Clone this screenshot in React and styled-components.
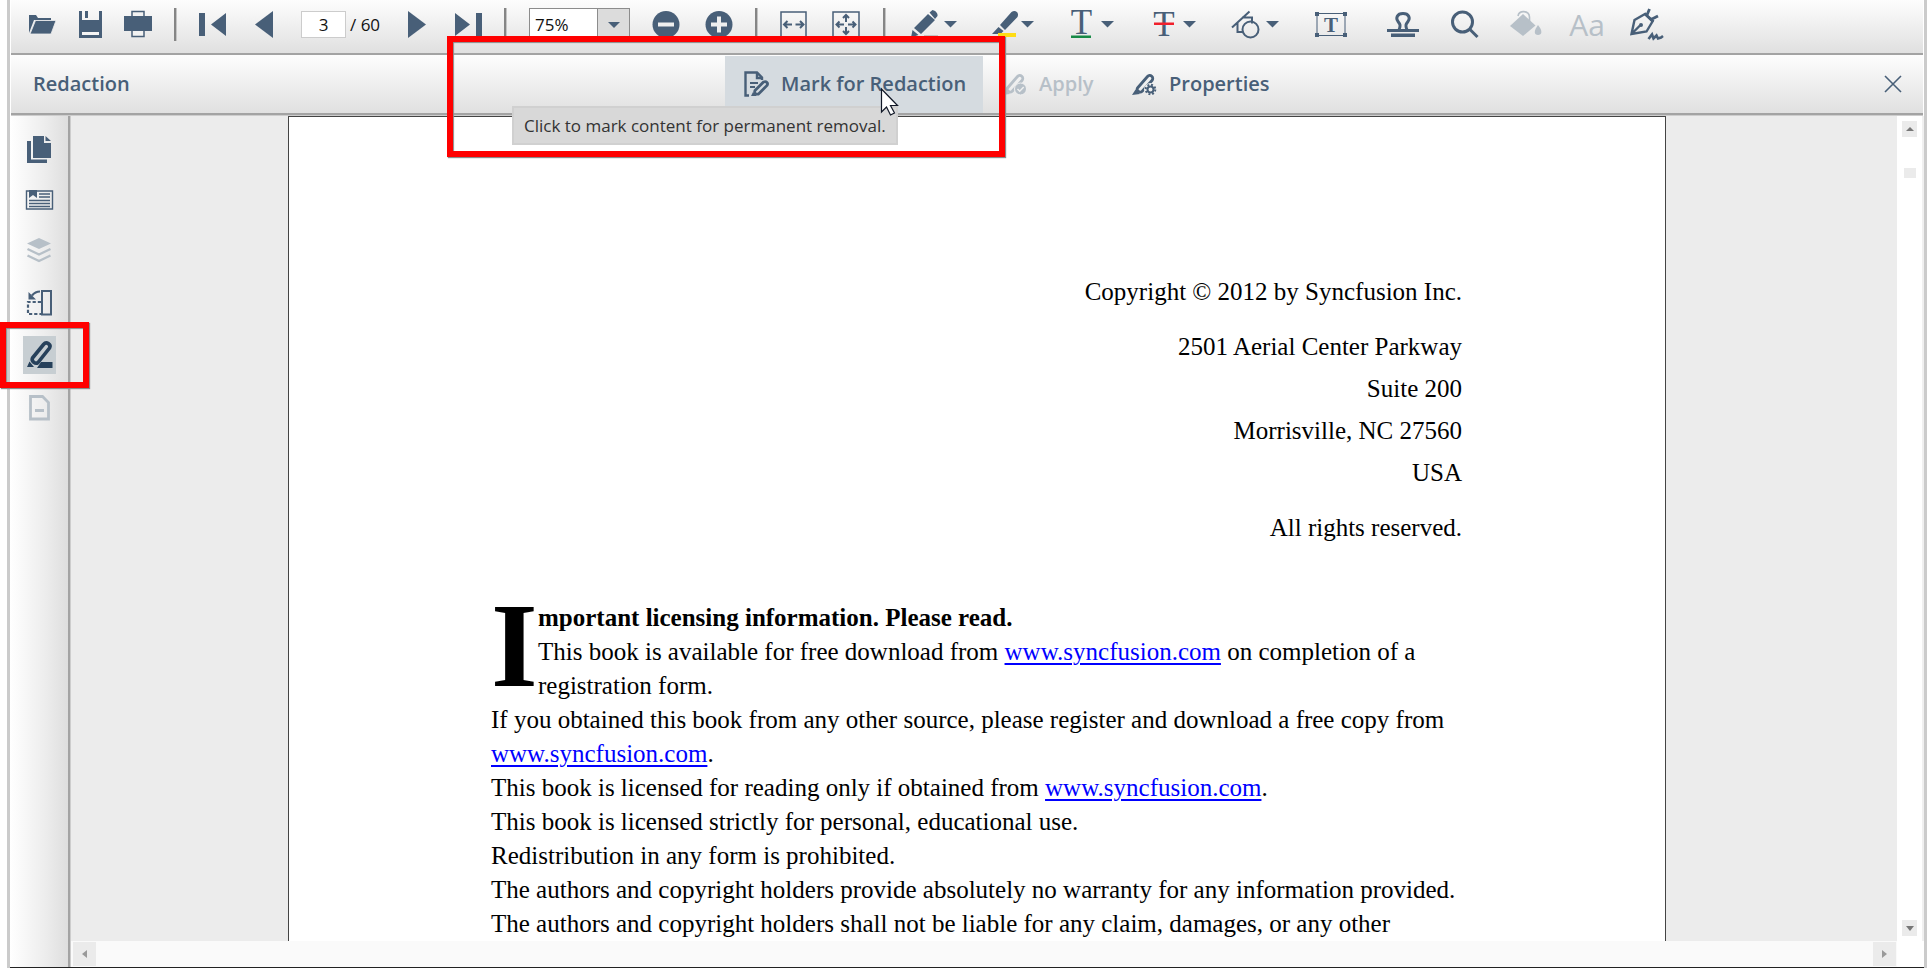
import React from "react";
import styled, { createGlobalStyle, css } from "styled-components";

const INK = "#485f78";
const MUTED = "#b7c0c8";
const UI_FONT = '"Open Sans", "Noto Sans", sans-serif';

const GlobalStyle = createGlobalStyle`
  *, *::before, *::after { box-sizing: border-box; }
  body { margin: 0; background: #fff; font-family: ${UI_FONT}; overflow: hidden; }
  button, input, select { font: inherit; color: inherit; }
  svg { display: block; overflow: visible; }
`;

const Shell = styled.div`
  display: grid;
  grid-template-rows: auto auto minmax(0, 1fr);
  grid-template-columns: minmax(0, 1fr);
  height: 100vh;
  margin-left: 7px;
  border: solid #cbcbcb;
  border-width: 0 3px;
  box-shadow: inset 0 -1px #222;
`;

const barStyle = css`
  display: flex;
  align-items: center;
  margin: 0 1px;
  background: linear-gradient(#fdfdfd, #ececec 60%, #e0e0e0);
  border-bottom: 2px solid #a3a3a3;
  box-shadow: 0 1px #cdcdcd;
  color: ${INK};
`;

const Toolbar = styled.header`
  ${barStyle}
  height: 55px;
  gap: 22px;
  padding-left: 17px;
`;

const Group = styled.div`
  display: flex;
  align-items: center;
  flex: none;
  gap: ${(p) => p.$gap}px;
`;

const Tool = styled.button`
  display: flex;
  align-items: center;
  justify-content: center;
  flex: none;
  width: ${(p) => p.$w}px;
  height: 41px;
  padding: 0;
  border: 0;
  background: none;
  color: ${(p) => (p.disabled ? MUTED : INK)};
`;

const Separator = styled.span`
  flex: none;
  width: 3px;
  height: 33px;
  margin-bottom: 4px;
  border-left: 2px solid #858585;
  border-right: 1px solid #c4c4c4;
`;

const PageField = styled.label`
  display: flex;
  align-items: center;
  gap: 4px;
  width: 79px;
  margin-bottom: 4px;
  color: #111;
  font-size: 17px;
  white-space: nowrap;
`;

const PageInput = styled.input`
  width: 45px;
  height: 27px;
  padding: 0;
  border: 1px solid #ccc;
  background: #fff;
  text-align: center;
`;

const ZoomBox = styled.div`
  display: grid;
  grid-template-columns: minmax(0, 1fr) 32px;
  flex: none;
  width: 101px;
  height: 33px;
  margin-bottom: 4px;
  border: 1px solid #8c8c8c;
  background: #fff;
`;

const ZoomSelect = styled.select`
  grid-area: 1 / 1 / 2 / 3;
  appearance: none;
  padding: 0 5px;
  border: 0;
  background: none;
  color: #111;
  font-size: 17px;
`;

const ZoomArrow = styled.span`
  grid-area: 1 / 2 / 2 / 3;
  display: grid;
  place-items: center;
  border-left: 1px solid #8c8c8c;
  background: #dcdcdc;
  color: ${INK};
  pointer-events: none;
`;

const RedactionBar = styled.section`
  ${barStyle}
  height: 60px;
  padding-top: 1px;
`;

const BarTitle = styled.h1`
  width: 138px;
  margin: 0;
  padding: 0 0 2px 22px;
  font-size: 20px;
  font-weight: 600;
`;

const Actions = styled.div`
  display: flex;
  align-items: stretch;
  justify-content: center;
  flex: 1;
  height: 100%;
`;

const ActionAnchor = styled.div`
  position: relative;
  display: flex;
`;

const Action = styled.button`
  display: flex;
  align-items: center;
  flex: none;
  gap: 12px;
  width: ${(p) => p.$w}px;
  padding: 0 0 2px 19px;
  border: 0;
  background: ${(p) => (p.$active ? "#d5dbe0" : "none")};
  color: ${(p) => (p.disabled ? MUTED : INK)};
  font-size: 20px;
  font-weight: 600;
  white-space: nowrap;
`;

const CloseButton = styled.button`
  display: grid;
  place-items: center;
  width: 60px;
  height: 100%;
  padding: 0 0 2px;
  border: 0;
  background: none;
`;

const Tooltip = styled.div`
  position: absolute;
  z-index: 2;
  top: 50px;
  left: -213px;
  padding: 0 10px;
  border: 2px solid #d0d0d0;
  background: #d8d8d8;
  color: #333;
  font-size: 17px;
  font-weight: 400;
  line-height: 35px;
  white-space: nowrap;
`;

const Callout = styled.div`
  position: absolute;
  z-index: 3;
  top: ${(p) => p.$top}px;
  left: ${(p) => p.$left}px;
  width: ${(p) => p.$w}px;
  height: ${(p) => p.$h}px;
  border: 6px solid #f00;
  box-shadow: 1px 1px 1px #8a8a8a, inset 1px 1px 1px #8a8a8a;
  pointer-events: none;
`;

const Cursor = styled.svg`
  position: absolute;
  z-index: 4;
  top: 32px;
  left: 155px;
`;

const Workspace = styled.main`
  display: grid;
  grid-template-columns: 61px minmax(0, 1fr) 27px;
  grid-template-rows: minmax(0, 1fr) 26px;
  padding: 1px 0;
`;

const Sidebar = styled.nav`
  grid-row: 1 / 3;
  display: flex;
  flex-direction: column;
  align-items: center;
  gap: 14px;
  padding-top: 12px;
  border-right: 2px solid #a3a3a3;
  box-shadow: 1px 0 #cdcdcd;
  background: linear-gradient(90deg, #fff, #ededed 60%, #dedede);
  margin-right: 1px;
`;

const SideAnchor = styled.div`
  position: relative;
`;

const SideButton = styled.button`
  display: block;
  width: 33px;
  height: 38px;
  padding: 0;
  border: 0;
  background: ${(p) => (p.$active ? "#c7ced2" : "none")};
  color: ${(p) => (p.disabled ? MUTED : p.$active ? "#27415b" : INK)};
`;

const Viewer = styled.div`
  display: flex;
  justify-content: center;
  overflow: hidden;
  padding-right: 14px;
  background: #ececec;
`;

const Page = styled.article`
  width: 100%;
  max-width: 1378px;
  height: max-content;
  min-height: 100%;
  padding: 154px 203px 0 202px;
  border: 1px solid #444;
  border-bottom: 0;
  background: #fff;
  color: #000;
  font-family: "Liberation Serif", serif;
  font-size: 25px;
`;

const Imprint = styled.p`
  margin: 0 0 13px;
  line-height: 42px;
  text-align: right;
`;

const Licence = styled.section`
  margin-top: 52px;
  line-height: 34px;
  p, h2 { margin: 0; font-size: 25px; }
  a { color: #00f; text-decoration-thickness: 2px; text-underline-offset: 3px; }
`;

const DropCap = styled.span`
  float: left;
  width: 47px;
  height: 102px;
  font-size: 120px;
  font-weight: 700;
  line-height: 90px;
`;

const VScroll = styled.div`
  display: flex;
  flex-direction: column;
  align-items: center;
  padding: 5px 0;
  border-right: 2px solid #f0f0f0;
  background: #fff;
`;

const HScroll = styled.div`
  display: flex;
  justify-content: space-between;
  padding: 1px 1px 1px 2px;
  background: #fafafa;
`;

const ScrollButton = styled.button`
  display: grid;
  place-items: center;
  flex: none;
  width: ${(p) => (p.$wide ? 23 : 15)}px;
  height: ${(p) => (p.$wide ? 24 : 16)}px;
  padding: 0;
  border: 0;
  background: #ebebeb;
`;

const VThumb = styled.span`
  width: 12px;
  height: 10px;
  margin: 31px 0 auto;
  background: #ebebeb;
`;

const Glyph = ({ w, h, children, ...rest }) => (
  <svg width={w} height={h} viewBox={`0 0 ${w} ${h}`} fill="currentColor" aria-hidden="true" {...rest}>
    {children}
  </svg>
);

const Caret = () => (
  <Glyph w={13} h={41}><path d="M0 15h13l-6.500 6.500z" /></Glyph>
);

const SplitTool = ({ label, w, children }) => (
  <Group $gap={0}>
    <Tool $w={w} aria-label={label}><Glyph w={w} h={41}>{children}</Glyph></Tool>
    <Tool $w={13} aria-label={`${label} options`}><Caret /></Tool>
  </Group>
);

const IconTool = ({ label, w, disabled, children }) => (
  <Tool $w={w} disabled={disabled} aria-label={label}><Glyph w={w} h={41}>{children}</Glyph></Tool>
);

const Marker = () => (
  <>
    <path d="M5.500 15 15.500 3.500a3 3 0 0 1 4.500 4L10 18.500c-2 1.500-6-.5-4.500-3.500z" fill="none" stroke="currentColor" strokeWidth="2.800" />
    <path d="m3.500 16.500 4.500 4.500-8 1z" />
  </>
);

function MainToolbar() {
  return (
    <Toolbar>
      <Group $gap={22}>
        <IconTool label="Open" w={28}>
          <path d="M1 27V9h7l2 3h13v2H6z" /><path d="M7.500 14.500H28l-5 13.500H2z" stroke="#efefef" strokeWidth=".8" />
        </IconTool>
        <IconTool label="Save" w={24}>
          <path d="M1 5h3v9h17V5h3v27H1z" /><path d="M7 5h3v7H7z" /><path d="M4 26h17v3H4z" fill="#f5f5f5" />
        </IconTool>
        <IconTool label="Print" w={28}>
          <path d="M0 10h28v15H0z" /><path d="M8 10V5.500h12V10M8 25v5.500h12V25" fill="#f2f2f2" stroke="currentColor" strokeWidth="1.500" />
        </IconTool>
      </Group>
      <Separator />
      <Group $gap={28}>
        <IconTool label="First page" w={28}><path d="M0 7h6v23H0zM27 7v23L12 18.500z" /></IconTool>
        <IconTool label="Previous page" w={18}><path d="M18 5v27L0 18.500z" /></IconTool>
        <PageField>
          <PageInput defaultValue="3" aria-label="Page number" />/ 60
        </PageField>
        <IconTool label="Next page" w={18}><path d="M0 5v27l18-13.500z" /></IconTool>
        <IconTool label="Last page" w={28}><path d="M22 7h6v24h-6zM1 7v23l15-11.500z" /></IconTool>
      </Group>
      <Separator />
      <ZoomBox>
        <ZoomSelect aria-label="Zoom" defaultValue="75%">
          <option>50%</option><option>75%</option><option>100%</option>
        </ZoomSelect>
        <ZoomArrow><Glyph w={12} h={6}><path d="M0 0h12L6 6z" /></Glyph></ZoomArrow>
      </ZoomBox>
      <Group $gap={25}>
        <IconTool label="Zoom out" w={28}>
          <circle cx="14" cy="18.500" r="13.500" /><path d="M6 16.500h16v4H6z" fill="#efefef" />
        </IconTool>
        <IconTool label="Zoom in" w={28}>
          <circle cx="14" cy="18.500" r="13.500" /><path d="M6 16.500h6v-6h4v6h6v4h-6v6h-4v-6H6z" fill="#efefef" />
        </IconTool>
      </Group>
      <Separator />
      <Group $gap={25}>
        <IconTool label="Fit width" w={28}>
          <path d="M1 6h25v25H1z" fill="none" stroke="currentColor" strokeWidth="1.500" />
          <path d="M4 18.500h8M7.500 15 4 18.500 7.500 22M23.500 18.500h-8M20 15l3.500 3.500L20 22" fill="none" stroke="currentColor" strokeWidth="2" />
        </IconTool>
        <IconTool label="Fit page" w={28}>
          <path d="M0 6h26v25H0z" fill="none" stroke="currentColor" strokeWidth="1.500" />
          <path d="M3.500 18.500H11M6.500 15.500l-3 3 3 3M22.500 18.500H15M19.500 15.500l3 3-3 3M13 9v7M10 12l3-3 3 3M13 28v-7M10 25l3 3 3-3" fill="none" stroke="currentColor" strokeWidth="2" />
        </IconTool>
      </Group>
      <Separator />
      <Group $gap={34}>
        <SplitTool label="Pen" w={36}>
          <path d="m6 22 14-14 7 6-14 14zM21.500 6.500l3-2.500c4 1 5.500 4 5 6l-2.500 3zM4.500 24l6 5-7.500 2.500z" />
          <path d="M16 29h14v2H16z" fill="#c3c3c3" />
        </SplitTool>
        <SplitTool label="Highlight" w={30}>
          <path d="M9 19 20.500 6c4-3 8 1 6 5L14 24zM7.500 21l5 4-3 3H1z" />
          <path d="M7 27h18v4H7z" fill="#ffdc15" />
        </SplitTool>
        <SplitTool label="Underline" w={33}>
          <text x="13.500" y="28" textAnchor="middle" fontFamily="Liberation Serif, serif" fontSize="35">T</text>
          <path d="M3 29.500h20V32H3z" fill="#178a46" />
        </SplitTool>
        <SplitTool label="Strikethrough" w={35}>
          <text x="16" y="30" textAnchor="middle" fontFamily="Liberation Serif, serif" fontSize="35">T</text>
          <path d="M6 16.500h20V19H6z" fill="#f0202c" />
        </SplitTool>
        <SplitTool label="Shapes" w={36}>
          <path d="M2 21.500 19.500 5.500M12 11.500h10v6M7.500 17v9h6" fill="none" stroke="currentColor" strokeWidth="2" />
          <circle cx="20.500" cy="23.500" r="8" fill="none" stroke="currentColor" strokeWidth="2" />
        </SplitTool>
      </Group>
      <IconTool label="Text box" w={60}>
        <path d="M16 7.500h28v22H16z" fill="none" stroke="currentColor" />
        <path d="M14 6h4v4h-4zM42 6h4v4h-4zM14 27h4v4h-4zM42 27h4v4h-4z" />
        <text x="30" y="26" textAnchor="middle" fontFamily="Liberation Serif, serif" fontWeight="700" fontSize="21">T</text>
      </IconTool>
      <Group $gap={21}>
        <IconTool label="Stamp" w={40}>
          <path d="M16 24c2-5 1-6-1-8.500C12.500 12 14 7.500 20 7.500s7.500 4.500 5 8c-2 2.500-3 3.500-1 8.500" fill="none" stroke="currentColor" strokeWidth="3" />
          <path d="M4 23h32v3H4zM8 27.500h24V31H8z" />
        </IconTool>
        <IconTool label="Search" w={40}>
          <circle cx="18.500" cy="16" r="10" fill="none" stroke="currentColor" strokeWidth="3" />
          <path d="m25.500 23 8 8" stroke="currentColor" strokeWidth="3" />
        </IconTool>
        <IconTool label="Fill colour" w={40} disabled>
          <path d="m5 20 13-12 12.500 11.500L18 30z" />
          <path d="M13 10c1-6 11-6 11.500 1v6" fill="none" stroke="currentColor" strokeWidth="1.600" />
          <path d="M33 19c5 6 4 10 0 10s-4.500-4 0-10z" />
        </IconTool>
        <IconTool label="Font" w={40} disabled>
          <text x="21" y="30" textAnchor="middle" fontFamily="Open Sans, sans-serif" fontSize="30">Aa</text>
        </IconTool>
        <IconTool label="Signature" w={40}>
          <path d="M4.500 28 7.500 14 18 8l7.500 7.500-6 10zM5 27.500l8-8" fill="none" stroke="currentColor" strokeWidth="2.400" />
          <circle cx="14" cy="19" r="2" />
          <path d="m17.500 7.500 9 8M20 9l2.500-6M24 13.500l7-3.500" fill="none" stroke="currentColor" strokeWidth="2.800" />
          <path d="m21.500 33 3.500-4.500 1.500 4 3-3 1.500 3 3-1 2-1.500" fill="none" stroke="currentColor" strokeWidth="2.600" />
        </IconTool>
      </Group>
    </Toolbar>
  );
}

function RedactionTools() {
  return (
    <RedactionBar>
      <BarTitle>Redaction</BarTitle>
      <Actions>
        <ActionAnchor>
          <Action $active $w={258}>
            <Glyph w={25} h={26}>
              <path d="M5 24.500H1.500v-23H13l5 5V9M13 1.500V7h5" fill="none" stroke="currentColor" strokeWidth="2.400" />
              <path d="M6 11h8v2H6zM6 15h5v2H6zM7 25l2-4 4 4z" />
              <path d="m11 19.500 8.500-8.500c3-1 5 1 3.500 3.500L14.500 23c-3 .5-4.500-1-3.500-3.500z" fill="none" stroke="currentColor" strokeWidth="2.800" />
            </Glyph>
            Mark for Redaction
          </Action>
          <Tooltip role="tooltip">Click to mark content for permanent removal.</Tooltip>
          <Callout $top={-20} $left={-278} $w={558} $h={121} />
          <Cursor width="20" height="30" viewBox="0 0 20 30" aria-hidden="true">
            <path d="M1.500 1v23l5-5 4 8 4-2-4-7.500h7z" fill="#fff" stroke="#111827" strokeWidth="1.200" />
          </Cursor>
        </ActionAnchor>
        <Action disabled $w={130}>
          <Glyph w={25} h={22}>
            <Marker />
            <circle cx="18.500" cy="16" r="6" stroke="#f0f0f0" />
            <path d="m15.500 16 2.200 2.200 4-4.200" fill="none" stroke="#f0f0f0" strokeWidth="1.500" />
          </Glyph>
          Apply
        </Action>
        <Action $w={174}>
          <Glyph w={25} h={22}>
            <Marker />
            <circle cx="18.500" cy="16.500" r="6.500" fill="#eee" />
            <circle cx="18.500" cy="16.500" r="3" fill="none" stroke="currentColor" strokeWidth="2" />
            <circle cx="18.500" cy="16.500" r="4.800" fill="none" stroke="currentColor" strokeWidth="2" strokeDasharray="1.900 1.870" />
          </Glyph>
          Properties
        </Action>
      </Actions>
      <CloseButton aria-label="Close">
        <Glyph w={18} h={18}><path d="m1 1 16 16M17 1 1 17" stroke="currentColor" strokeWidth="1.600" /></Glyph>
      </CloseButton>
    </RedactionBar>
  );
}

const SideTool = ({ label, active, disabled, children }) => (
  <SideButton $active={active} disabled={disabled} aria-label={label}>
    <Glyph w={33} h={38}>{children}</Glyph>
  </SideButton>
);

function SidePanel() {
  return (
    <Sidebar>
      <SideTool label="Page thumbnails">
        <path d="M10 8h11v7h7v15H10zM22.500 8v5H28z" /><path d="M4 13h4v18.500h16V35H4z" />
      </SideTool>
      <SideTool label="Bookmarks">
        <path d="M3.500 11h26v18h-26z" fill="none" stroke="currentColor" strokeWidth="1.400" />
        <path d="M6 10h8v8l-4-3-4 3z" />
        <path d="M16 14h11M16 17h11M6 20.500h21M6 23.500h21M6 26.500h21" stroke="currentColor" strokeWidth="1.300" />
      </SideTool>
      <SideTool label="Layers" disabled>
        <path d="m16 6 12 5.500L16 17 4 11.500z" />
        <path d="m4.500 17 11.500 5.500L27.500 17M4.500 23.500 16 29l11.500-5.500" fill="none" stroke="currentColor" strokeWidth="2.400" />
      </SideTool>
      <SideTool label="Organize pages">
        <path d="M19 7h9v23.500h-9z" fill="none" stroke="currentColor" strokeWidth="2" />
        <path d="M18 18H5v12h13" fill="none" stroke="currentColor" strokeWidth="2.200" strokeDasharray="3.200 2" />
        <path d="M17 7.500c-4 0-6 1.500-8 4" fill="none" stroke="currentColor" strokeWidth="2.200" /><path d="M5.500 8v7.500H13z" />
      </SideTool>
      <SideAnchor>
        <SideTool label="Redaction" active>
          <path d="M9.500 22 20.500 8.500c3-3.500 8 0 6 3.500L15 26.500c-2.500 2-7-1-5.500-4.500z" fill="none" stroke="currentColor" strokeWidth="3.600" />
          <path d="m6.500 25.500 4.500 5.500H4zM18 26h11.500v6H14z" />
        </SideTool>
        <Callout $top={-14} $left={-23} $w={89} $h={66} />
      </SideAnchor>
      <SideTool label="Document" disabled>
        <path d="M7.500 8.500h12l6 6V31h-18zM12 22.500h9" fill="none" stroke="currentColor" strokeWidth="2.800" />
      </SideTool>
    </Sidebar>
  );
}

const SiteLink = () => <a href="#syncfusion">www.syncfusion.com</a>;

export default function App() {
  return (
    <>
      <GlobalStyle />
      <Shell>
        <MainToolbar />
        <RedactionTools />
        <Workspace>
          <SidePanel />
          <Viewer>
            <Page>
              <Imprint>Copyright © 2012 by Syncfusion Inc.</Imprint>
              <Imprint>
                2501 Aerial Center Parkway<br />Suite 200<br />Morrisville, NC 27560<br />USA
              </Imprint>
              <Imprint>All rights reserved.</Imprint>
              <Licence>
                <DropCap>I</DropCap>
                <h2>mportant licensing information. Please read.</h2>
                <p>This book is available for free download from <SiteLink /> on completion of a registration form.</p>
                <p>If you obtained this book from any other source, please register and download a free copy from <SiteLink />.</p>
                <p>This book is licensed for reading only if obtained from <SiteLink />.</p>
                <p>This book is licensed strictly for personal, educational use.</p>
                <p>Redistribution in any form is prohibited.</p>
                <p>The authors and copyright holders provide absolutely no warranty for any information provided.</p>
                <p>The authors and copyright holders shall not be liable for any claim, damages, or any other</p>
              </Licence>
            </Page>
          </Viewer>
          <VScroll>
            <ScrollButton aria-label="Scroll up"><Glyph w={8} h={4} color="#777"><path d="M0 4h8L4 0z" /></Glyph></ScrollButton>
            <VThumb />
            <ScrollButton aria-label="Scroll down"><Glyph w={8} h={5} color="#777"><path d="M0 0h8L4 5z" /></Glyph></ScrollButton>
          </VScroll>
          <HScroll>
            <ScrollButton $wide aria-label="Scroll left"><Glyph w={5} h={8} color="#999"><path d="M5 0v8L0 4z" /></Glyph></ScrollButton>
            <ScrollButton $wide aria-label="Scroll right"><Glyph w={5} h={8} color="#999"><path d="M0 0v8l5-4z" /></Glyph></ScrollButton>
          </HScroll>
        </Workspace>
      </Shell>
    </>
  );
}
